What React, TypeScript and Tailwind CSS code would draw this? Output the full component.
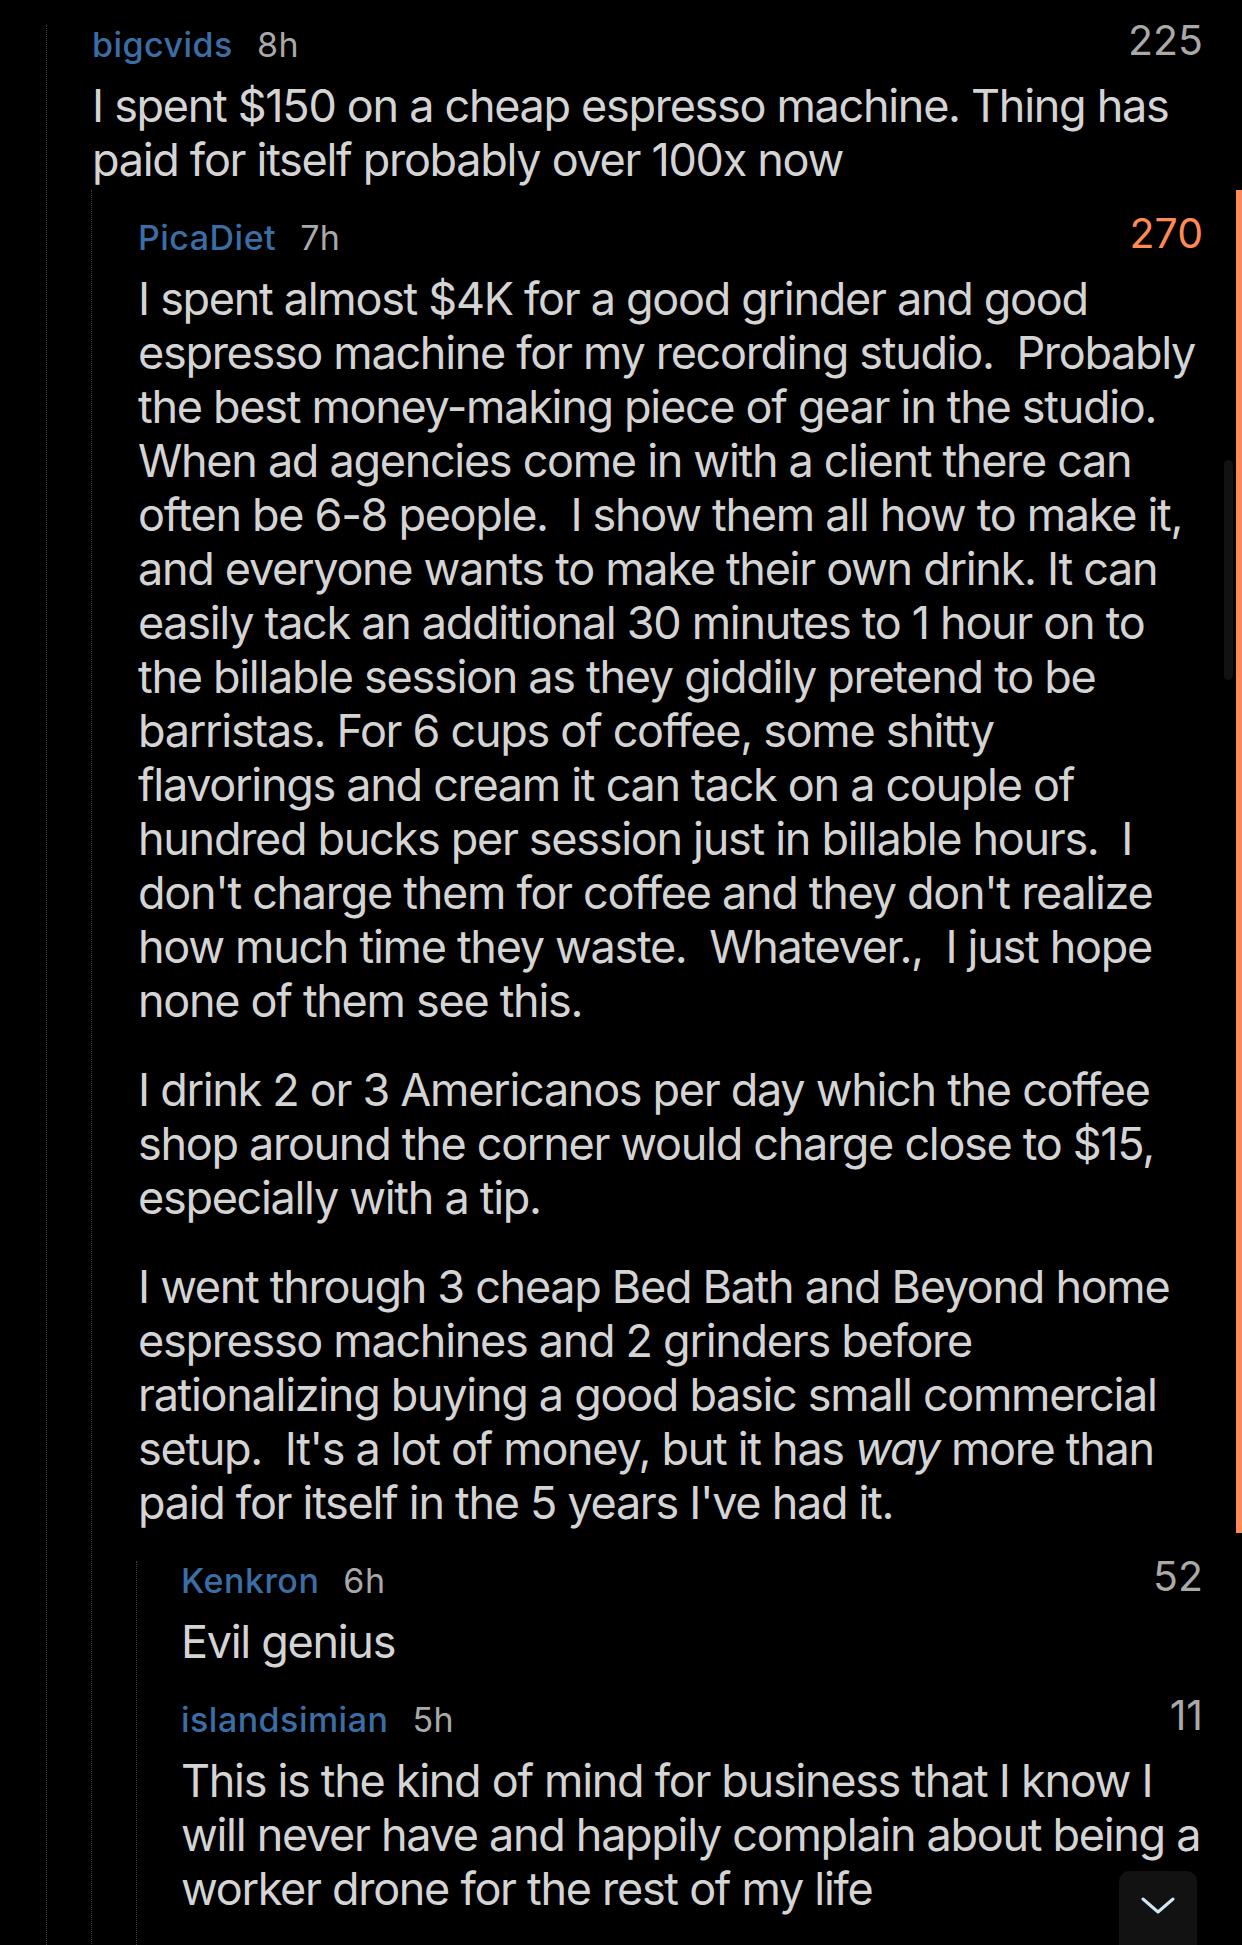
import React from "react";

type Para = { lines: React.ReactNode[] };

function Header({ user, time, score, orange }: { user: string; time: string; score: string; orange?: boolean }) {
  return (
    <div className="flex justify-between items-start h-[40px]">
      <div className="flex items-start tracking-[0.03em]">
        <span className="text-[34px] leading-[40px] font-medium text-[#3a6ea5]">{user}</span>
        <span className="ml-[24px] text-[34px] leading-[40px] text-[#a9a9a9]">{time}</span>
      </div>
      <span className={"text-[41px] leading-[30px] " + (orange ? "text-[#ff8a57]" : "text-[#a9a9a9]")}>{score}</span>
    </div>
  );
}

function Body({ paras }: { paras: Para[] }) {
  return (
    <div className="mt-[14px] text-[45px] leading-[54px] tracking-[-0.029em] text-[#d4d4d4] whitespace-pre flex flex-col gap-[35px]">
      {paras.map((p, i) => (
        <div key={i}>
          {p.lines.map((l, j) => (
            <div key={j}>{l}</div>
          ))}
        </div>
      ))}
    </div>
  );
}

export default function App() {
  return (
    <div
      className="relative w-[1242px] h-[1945px] bg-black overflow-hidden"
      style={{ fontFamily: "Inter, 'Noto Sans', sans-serif" }}
    >
      <div className="pt-[25px] pl-[46px] pr-[39px] h-full">
        <div className="border-l border-dotted border-[#3b3f44] pl-[45px] h-full">
          <Header user="bigcvids" time="8h" score="225" />
          <Body
            paras={[
              {
                lines: [
                  "I spent $150 on a cheap espresso machine. Thing has",
                  "paid for itself probably over 100x now",
                ],
              },
            ]}
          />

          <div className="mt-[31px] -ml-[46px] pl-[45px]">
            <div className="border-l border-dotted border-[#3b3f44] pl-[46px] h-[1800px]">
              <div className="-mt-[28px] pt-[28px] pb-[3px] -mr-[39px] pr-[33px] border-r-[6px] border-[#ff8a57]">
                <Header user="PicaDiet" time="7h" score="270" orange />
                <Body
                  paras={[
                    {
                      lines: [
                        "I spent almost $4K for a good grinder and good",
                        "espresso machine for my recording studio.  Probably",
                        "the best money-making piece of gear in the studio.",
                        "When ad agencies come in with a client there can",
                        "often be 6-8 people.  I show them all how to make it,",
                        "and everyone wants to make their own drink. It can",
                        "easily tack an additional 30 minutes to 1 hour on to",
                        "the billable session as they giddily pretend to be",
                        "barristas. For 6 cups of coffee, some shitty",
                        "flavorings and cream it can tack on a couple of",
                        "hundred bucks per session just in billable hours.  I",
                        "don't charge them for coffee and they don't realize",
                        "how much time they waste.  Whatever.,  I just hope",
                        "none of them see this.",
                      ],
                    },
                    {
                      lines: [
                        "I drink 2 or 3 Americanos per day which the coffee",
                        "shop around the corner would charge close to $15,",
                        "especially with a tip.",
                      ],
                    },
                    {
                      lines: [
                        "I went through 3 cheap Bed Bath and Beyond home",
                        "espresso machines and 2 grinders before",
                        "rationalizing buying a good basic small commercial",
                        <>
                          {"setup.  It's a lot of money, but it has "}
                          <em>way</em>
                          {" more than"}
                        </>,
                        "paid for itself in the 5 years I've had it.",
                      ],
                    },
                  ]}
                />
              </div>

              <div className="mt-[28px] -ml-[47px] pl-[45px]">
                <div className="border-l border-dotted border-[#3b3f44] pl-[44px] h-[600px]">
                  <Header user="Kenkron" time="6h" score="52" />
                  <Body paras={[{ lines: ["Evil genius"] }]} />
                  <div className="mt-[31px]">
                    <Header user="islandsimian" time="5h" score="11" />
                    <Body
                      paras={[
                        {
                          lines: [
                            "This is the kind of mind for business that I know I",
                            "will never have and happily complain about being a",
                            "worker drone for the rest of my life",
                          ],
                        },
                      ]}
                    />
                  </div>
                </div>
              </div>
            </div>
          </div>
        </div>
      </div>

      {/* scrollbar thumb */}
      <div className="absolute left-[1224px] top-[460px] w-[9px] h-[220px] rounded-full bg-[#121212]" />

      {/* scroll-down button */}
      <div className="absolute left-[1119px] top-[1871px] w-[78px] h-[100px] rounded-[10px] bg-[#121212] flex justify-center pt-[26px]">
        <svg width="34" height="18" viewBox="0 0 34 18" fill="none">
          <path d="M2 2 L17 15 L32 2" stroke="#cfe6f5" strokeWidth="3" strokeLinecap="round" strokeLinejoin="round" />
        </svg>
      </div>
    </div>
  );
}
